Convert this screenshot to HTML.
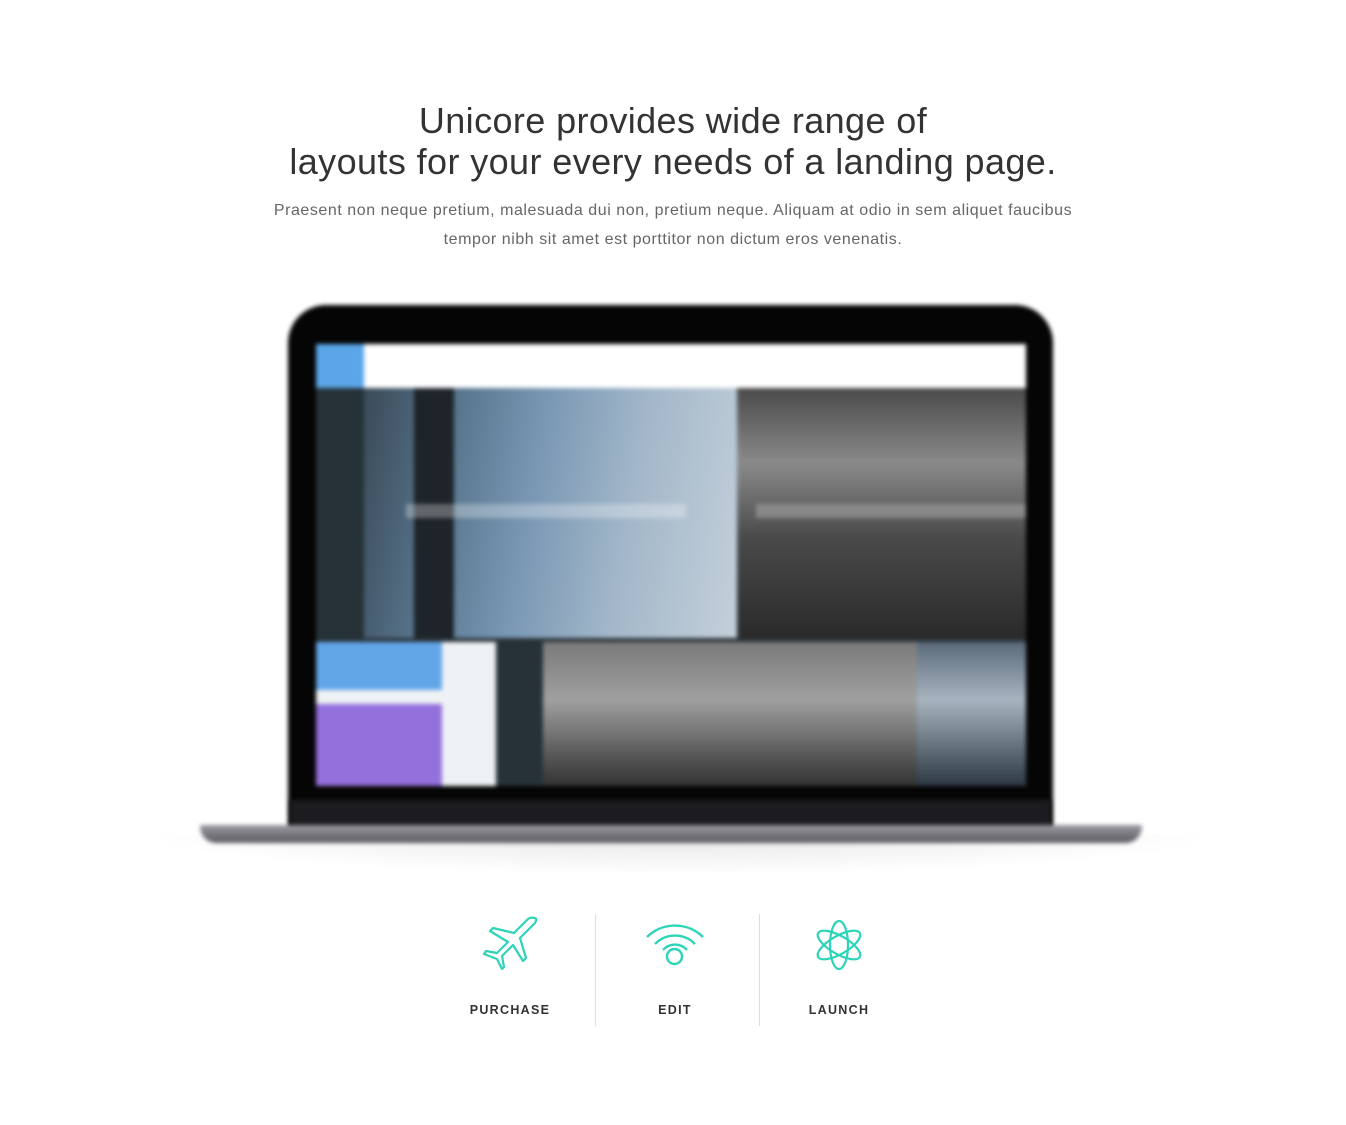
<!DOCTYPE html>
<html><head><style>
body{margin:0;background:#fff;width:1346px;height:1125px;overflow:hidden;font-family:"Liberation Sans",sans-serif;position:relative}
h1{position:absolute;top:100px;left:0;width:1346px;margin:0;text-align:center;font-weight:400;font-size:36px;line-height:41px;color:#333;letter-spacing:0.4px}
p.sub{position:absolute;top:196px;left:0;width:1346px;margin:0;text-align:center;font-size:16px;line-height:29px;color:#666;letter-spacing:0.55px}
.a{position:absolute}
.blur{filter:blur(2px)}
.lab{position:absolute;top:1003px;font-size:12.5px;font-weight:700;letter-spacing:1.3px;color:#333;text-align:center;width:160px}
.div{position:absolute;top:914px;width:1px;height:112px;background:#ddd}
</style></head><body>
<h1>Unicore provides wide range of<br>layouts for your every needs of a landing page.</h1>
<p class="sub">Praesent non neque pretium, malesuada dui non, pretium neque. Aliquam at odio in sem aliquet faucibus<br>tempor nibh sit amet est porttitor non dictum eros venenatis.</p>

<div class="a" style="left:140px;top:835px;width:1080px;height:40px;background:radial-gradient(ellipse at center top,#e6e6e6,#fff 70%)"></div>
<div class="a blur" style="left:288px;top:305px;width:765px;height:525px;background:#050505;border-radius:38px 38px 0 0"></div>
<div class="a blur" style="left:290px;top:800px;width:761px;height:28px;background:#1c1c20"></div>
<div class="a blur" style="left:200px;top:825px;width:942px;height:18px;background:linear-gradient(#9a9aa0,#5a5a60);border-radius:4px 4px 40px 40px"></div>

<div class="a blur" style="left:316px;top:344px;width:710px;height:442px;background:#2a3238;overflow:hidden">
 <div class="a" style="left:0;top:0;width:710px;height:44px;background:#fff"></div>
 <div class="a" style="left:0;top:0;width:48px;height:44px;background:#5aa6e8"></div>
 <div class="a" style="left:0;top:44px;width:48px;height:254px;background:#263238"></div>
 <div class="a" style="left:48px;top:44px;width:373px;height:250px;background:linear-gradient(100deg,#3a4a58 0,#5a7890 25%,#7a98b4 45%,#a4b8ca 70%,#c4d0da 100%)"></div>
 <div class="a" style="left:98px;top:44px;width:40px;height:250px;background:#1e242a"></div>
 <div class="a" style="left:421px;top:44px;width:289px;height:250px;background:linear-gradient(#4a4a4a,#8a8a8a 30%,#4a4a4a 60%,#2a2a2a)"></div>
 <div class="a" style="left:90px;top:160px;width:280px;height:14px;background:rgba(255,255,255,.3)"></div>
 <div class="a" style="left:440px;top:160px;width:270px;height:14px;background:rgba(255,255,255,.25)"></div>
 <div class="a" style="left:0;top:298px;width:126px;height:48px;background:#62a6e8"></div>
 <div class="a" style="left:0;top:346px;width:126px;height:14px;background:#eef2f4"></div>
 <div class="a" style="left:0;top:360px;width:126px;height:82px;background:#9470dd"></div>
 <div class="a" style="left:126px;top:298px;width:54px;height:144px;background:#eef2f4"></div>
 <div class="a" style="left:180px;top:298px;width:47px;height:144px;background:#263238"></div>
 <div class="a" style="left:227px;top:298px;width:374px;height:144px;background:linear-gradient(#7a7a7a,#a0a0a0 40%,#555 80%,#333)"></div>
 <div class="a" style="left:601px;top:298px;width:109px;height:144px;background:linear-gradient(#5a6a7a,#a8b4c0 40%,#2c3844)"></div>
</div>

<svg class="a" style="left:480px;top:915px" width="60" height="60" viewBox="0 0 60 60" fill="none" stroke="#2dd4b8" stroke-width="2.2" stroke-linejoin="round">
<path d="M54 3 Q58 3 55 8 L40 23 L46 43 L43 46 L33 30 L22 41 L24 52 L22 54 L17 44 L4 39 L6 36 L17 38 L28 27 L10 16 L13 13 L34 18 L48 4 Q51 2 54 3Z"/></svg>
<svg class="a" style="left:644px;top:918px" width="62" height="50" viewBox="0 0 62 50" fill="none" stroke="#2dd4b8" stroke-width="2.4">
<path d="M3 19 A40 40 0 0 1 59 19"/><path d="M11 26 A28 28 0 0 1 51 26"/><path d="M19 32 A16 16 0 0 1 43 32"/><circle cx="30.5" cy="38.5" r="7.5"/></svg>
<svg class="a" style="left:814px;top:918px" width="50" height="54" viewBox="0 0 50 54" fill="none" stroke="#2dd4b8" stroke-width="2.2">
<ellipse cx="25" cy="27" rx="9" ry="24"/><ellipse cx="25" cy="27" rx="9" ry="24" transform="rotate(60 25 27)"/><ellipse cx="25" cy="27" rx="9" ry="24" transform="rotate(-60 25 27)"/></svg>

<div class="lab" style="left:430px">PURCHASE</div>
<div class="lab" style="left:595px">EDIT</div>
<div class="lab" style="left:759px">LAUNCH</div>
<div class="div" style="left:595px"></div>
<div class="div" style="left:759px"></div>
</body></html>
